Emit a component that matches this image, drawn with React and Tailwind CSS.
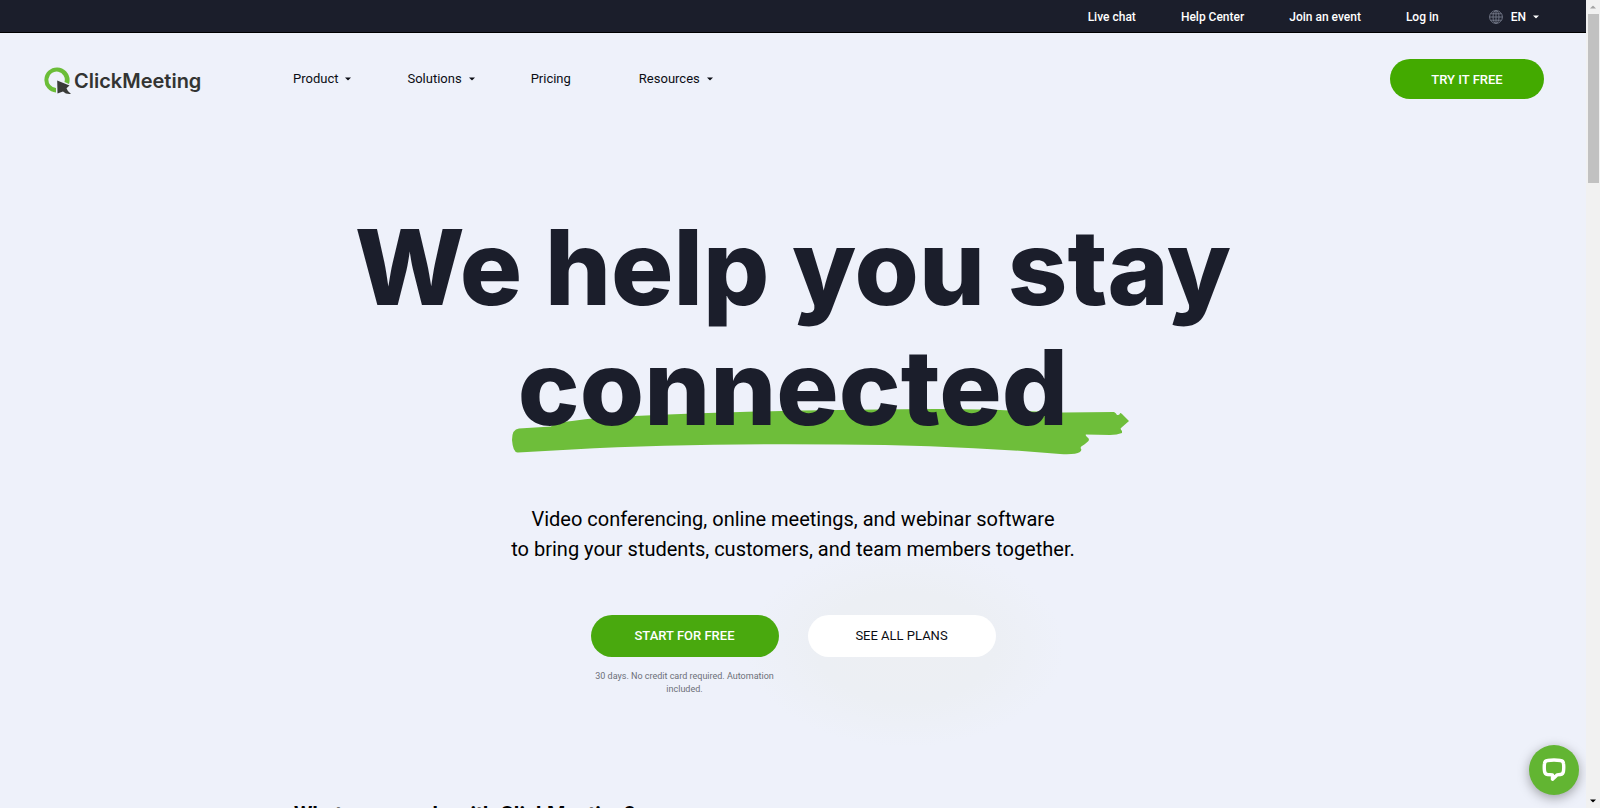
import React from "react";

const topLinks = ["Live chat", "Help Center", "Join an event", "Log in"];

function Caret({ className = "" }) {
  return (
    <svg viewBox="0 0 8 4" aria-hidden="true" className={`h-1 w-2 shrink-0 fill-current ${className}`}>
      <path d="M1 .4h6L4.500 3q-.5.4-1 0z" />
    </svg>
  );
}

function Globe() {
  return (
    <svg viewBox="0 0 14 14" aria-hidden="true" className="size-3.5 fill-none stroke-[#6f7484]">
      <circle cx="7" cy="7" r="6.4" />
      <ellipse cx="7" cy="7" rx="3" ry="6.4" />
      <path d="M7 .6v12.800M.6 7h12.800M1.600 3.800h10.800M1.600 10.200h10.800" />
    </svg>
  );
}

function TopBar() {
  return (
    <div className="flex h-[33px] items-center justify-end border-b border-black bg-[#1b1e2b] pt-px pr-[46px] text-[12px] font-medium text-white">
      <nav aria-label="Support" className="flex items-center gap-[45px]">
        {topLinks.map((label) => (
          <a key={label} href="#">
            {label}
          </a>
        ))}
      </nav>
      <button type="button" aria-label="Language: EN" className="ml-[50px] flex items-center">
        <Globe />
        <span className="ml-2 mr-1.5">EN</span>
        <Caret />
      </button>
    </div>
  );
}

function Logo() {
  return (
    <a href="#" className="flex w-[249px] items-center gap-0.5 pt-1 text-[#333432]">
      <svg viewBox="0 0 28 28" aria-hidden="true" className="size-7 shrink-0">
        <path
          d="M12 25.600A12.600 12.600 0 1 1 25.600 13Q25.600 15 25 17L20.500 15A8.200 8.200 0 1 0 12 21Z"
          fill="#6bbd38"
        />
        <path d="M13.200 13.500L25.500 18.500 22.500 21.200Q23.600 24.800 27 27Q22 27.600 19 24.600L13.500 26.600Z" fill="#3a3b38" />
      </svg>
      <span className="font-[Inter,sans-serif] text-[20px] leading-7 font-semibold">ClickMeeting</span>
    </a>
  );
}

function Header() {
  return (
    <header className="flex items-center pt-[26px] pr-[42px] pl-11">
      <Logo />
      <nav aria-label="Main" className="flex flex-1 items-center gap-[55px] text-[13px] text-[#0b0d14]">
        <button type="button" className="flex items-center gap-1.5">
          Product <Caret />
        </button>
        <button type="button" className="flex items-center gap-1.5">
          Solutions <Caret />
        </button>
        <a href="#" className="pr-[13px]">
          Pricing
        </a>
        <button type="button" className="flex items-center gap-1.5">
          Resources <Caret />
        </button>
      </nav>
      <a
        href="#"
        className="flex h-10 w-[154px] items-center justify-center rounded-full bg-[#43aa00] pt-px text-[13px] font-medium text-white"
      >
        TRY IT FREE
      </a>
    </header>
  );
}

function BrushStroke() {
  return (
    <svg
      viewBox="0 0 618 46"
      aria-hidden="true"
      className="absolute top-[82px] -left-1.5 -z-10 h-[46px] w-[618px] fill-[#6ebe3a]"
    >
      <path d="M0 31Q0 20 7 19.500L39 17.500Q41 14 60 12Q85 8 123 7Q230 2 328 1Q440-1 488 1Q530 3 551 3.500L602 3Q604 4 605 6Q608 6 608 4Q609 4 610 5L617 12L609 19Q608 20 610 22V24Q605 26 598 26L574 25.500Q573 26 575 28Q577 29 577 31Q576 33 570 37Q568 38 569 40Q570 41 568 43Q563 46 548 45L510 42Q420 36 328 35.500Q180 34 60 40.500L6 43.500Q1 44 0 31Z" />
    </svg>
  );
}

function Hero() {
  return (
    <section className="relative isolate flex flex-col items-center pt-[108px] text-center">
      <div className="absolute top-[448px] left-1/2 -z-10 h-[200px] w-[320px] -translate-x-[48px] rounded-full bg-[radial-gradient(closest-side,#edeff3,#eceff4_55%,#eef1fa)]" />
      <h1 className="font-[Inter,sans-serif] text-[104px] leading-[120px] font-extrabold text-[#1b1e2b]">
        We help you stay
        <br />
        <span className="relative inline-block">
          connected
          <BrushStroke />
        </span>
      </h1>
      <p className="mt-[57px] text-[20px] leading-[30px] text-black">
        Video conferencing, online meetings, and webinar software
        <br />
        to bring your students, customers, and team members together.
      </p>
      <div className="mt-[51px] flex items-start gap-[29px]">
        <div className="w-[188px]">
          <a
            href="#"
            className="flex h-[42px] items-center justify-center rounded-full bg-[#49a90e] text-[13px] font-medium text-white"
          >
            START FOR FREE
          </a>
          <p className="mt-[13px] text-[9px] leading-[13px] text-[#6c6f78]">
            30 days. No credit card required. Automation included.
          </p>
        </div>
        <a
          href="#"
          className="flex h-[42px] w-[188px] items-center justify-center rounded-full bg-white text-[13px] text-[#0b0d14]"
        >
          SEE ALL PLANS
        </a>
      </div>
    </section>
  );
}

function ChatButton() {
  return (
    <button
      type="button"
      aria-label="Open chat"
      className="absolute right-[7px] bottom-[13px] flex size-[50px] items-center justify-center rounded-full bg-[#62b532] shadow-[0_3px_12px_rgba(0,0,0,0.35)]"
    >
      <svg viewBox="0 0 24 24" aria-hidden="true" className="size-6">
        <path
          d="M5.500 2.500Q12 1.600 18.500 2.500 21.200 2.800 21.500 5.500 22 9.200 21.500 13 21.200 16.200 18.500 16.500L15 16.900 10.500 21.200V16.900L5.500 16.500Q2.800 16.200 2.500 13 2 9.200 2.500 5.500 2.800 2.800 5.500 2.500Z"
          fill="none"
          stroke="#fff"
          strokeWidth="3.4"
          strokeLinejoin="round"
        />
      </svg>
    </button>
  );
}

function ScrollBar() {
  return (
    <div aria-hidden="true" className="flex w-3.5 shrink-0 flex-col items-center bg-[#f1f1f1]">
      <div className="flex h-3.5 items-center">
        <Caret className="rotate-180 text-[#a3a3a3]" />
      </div>
      <div className="h-[169px] w-[11px] bg-[#c1c1c1]" />
      <div className="mt-auto flex h-3.5 items-center">
        <Caret className="text-black" />
      </div>
    </div>
  );
}

export default function App() {
  return (
    <div className="flex h-screen font-[Roboto,sans-serif]">
      <div className="relative min-w-0 flex-1 overflow-hidden bg-[#eef1fa]">
        <TopBar />
        <Header />
        <main>
          <Hero />
          <h2 className="mt-[102px] pl-[294px] text-[21px] leading-8 font-bold text-black">
            What can you do with ClickMeeting?
          </h2>
        </main>
        <ChatButton />
      </div>
      <ScrollBar />
    </div>
  );
}
